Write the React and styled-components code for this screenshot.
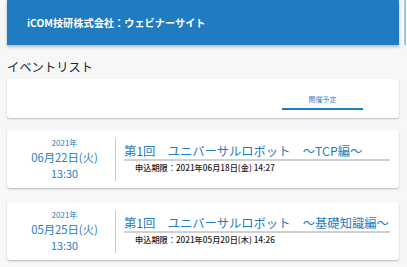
import React from "react";
import styled, { createGlobalStyle } from "styled-components";

const Global = createGlobalStyle`
  html, body { margin: 0; padding: 0; background: #f7f7f7; }
  body { font-family: "Noto Sans CJK JP", "Noto Sans", sans-serif; overflow: hidden; }
`;

const Page = styled.div`
  width: 407px;
  height: 267px;
  display: flex;
  flex-direction: column;
  padding: 0 8px 0 7px;
  box-sizing: border-box;
  position: relative;
`;

const Header = styled.header`
  height: 45px;
  flex-shrink: 0;
  background: #1f7cc1;
  box-shadow: 0 2px 3px rgba(0,0,0,0.25);
  display: flex;
  align-items: center;
  padding: 0 0 0 20px;
  box-sizing: border-box;
  color: #fff;
  font-size: 10.2px;
  font-weight: 700;
`;

const EdgeStrip = styled.div`
  position: absolute;
  top: 0;
  right: 1px;
  width: 2px;
  height: 45px;
  background: #9cc6ea;
`;

const SectionTitle = styled.h2`
  margin: 14px 0 0 0;
  font-size: 12.3px;
  font-weight: 400;
  color: #222;
  line-height: 16px;
`;

const Card = styled.div`
  background: #fff;
  border-radius: 3px;
  box-shadow: 0 1px 2px rgba(0,0,0,0.25);
  flex-shrink: 0;
`;

const TabCard = styled(Card)`
  margin-top: 4px;
  height: 39px;
  display: flex;
  align-items: flex-start;
  justify-content: flex-end;
  padding-right: 36px;
`;

const Tab = styled.div`
  width: 81px;
  height: 31px;
  display: flex;
  align-items: flex-end;
  justify-content: center;
  font-size: 7px;
  line-height: 10px;
  color: #3f86c4;
  border-bottom: 2px solid #1f7cc1;
  padding-bottom: 4px;
  box-sizing: border-box;
`;

const List = styled.div`
  display: flex;
  flex-direction: column;
  gap: 14px;
  margin-top: 12px;
`;

const EventCard = styled(Card)`
  height: 58px;
  display: flex;
  align-items: center;
`;

const DateCol = styled.div`
  width: 109px;
  height: 43px;
  flex-shrink: 0;
  padding-left: 7px;
  box-sizing: border-box;
  border-right: 1px solid #c8c8c8;
  display: flex;
  flex-direction: column;
  align-items: center;
  justify-content: center;
  color: #1f7cc1;
`;

const Year = styled.div`
  font-size: 8px;
  line-height: 12px;
`;

const Day = styled.div`
  font-size: 11.3px;
  line-height: 16px;
`;

const Time = styled.div`
  font-size: 10.8px;
  line-height: 16px;
`;

const Info = styled.div`
  flex: 1;
  min-width: 0;
  padding: 0 9px 0 8px;
  display: flex;
  flex-direction: column;
  margin-top: -2px;
`;

const Title = styled.div`
  font-size: 12.3px;
  line-height: 16px;
  color: #1f7cc1;
  border-bottom: 2px solid #d0d0d0;
  white-space: nowrap;
`;

const Deadline = styled.div`
  font-size: 8.2px;
  line-height: 12px;
  color: #222;
  font-weight: 500;
  padding-left: 11px;
  white-space: nowrap;
`;

const events = [
  { day: "06月22日(火)", title: "第1回　ユニバーサルロボット　～TCP編～", deadline: "申込期限：2021年06月18日(金) 14:27" },
  { day: "05月25日(火)", title: "第1回　ユニバーサルロボット　～基礎知識編～", deadline: "申込期限：2021年05月20日(木) 14:26" },
];

export default function App() {
  return (
    <>
      <Global />
      <Page>
        <Header>iCOM技研株式会社：ウェビナーサイト</Header>
        <EdgeStrip />
        <SectionTitle>イベントリスト</SectionTitle>
        <TabCard>
          <Tab>開催予定</Tab>
        </TabCard>
        <List>
          {events.map((e) => (
            <EventCard key={e.day}>
              <DateCol>
                <Year>2021年</Year>
                <Day>{e.day}</Day>
                <Time>13:30</Time>
              </DateCol>
              <Info>
                <Title>{e.title}</Title>
                <Deadline>{e.deadline}</Deadline>
              </Info>
            </EventCard>
          ))}
        </List>
      </Page>
    </>
  );
}
